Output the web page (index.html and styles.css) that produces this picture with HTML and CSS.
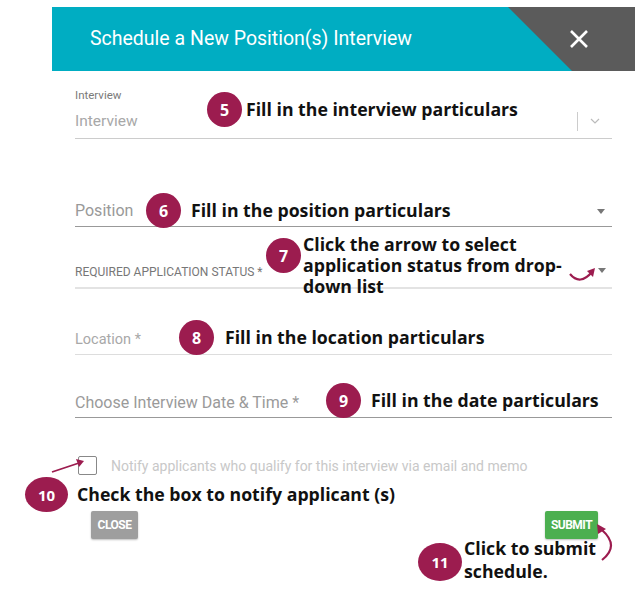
FILE: index.html
```html
<!DOCTYPE html>
<html lang="en">
<head>
    <meta charset="UTF-8">
    <meta name="viewport" content="width=device-width, initial-scale=1.0">
    <title>Schedule a New Position(s) Interview</title>
    <link rel="stylesheet" href="styles.css">
</head>
<body>
    <div class="page">
        <div class="dialog">
            <div class="dialog-head">
                <h2 class="dialog-title">Schedule a New Position(s) Interview</h2>
                <div class="dialog-close">
                    <svg width="20" height="20" viewBox="0 0 20 20"><path d="M2 2 L18 18 M18 2 L2 18" stroke="#fff" stroke-width="2.6" fill="none"/></svg>
                </div>
            </div>

            <div class="dialog-body">
                <div class="field field-interview">
                    <div class="field-label">Interview</div>
                    <div class="field-row">
                        <span class="field-value">Interview</span>
                        <span class="select-tools">
                            <span class="sep"></span>
                            <svg width="10" height="6" viewBox="0 0 10 6"><path d="M1 1 L5 5 L9 1" stroke="#bbb" stroke-width="1.2" fill="none"/></svg>
                        </span>
                    </div>
                </div>

                <div class="field field-position dark-line">
                    <div class="field-row">
                        <span class="field-value">Position</span>
                        <span class="caret"></span>
                    </div>
                </div>

                <div class="field field-status">
                    <div class="field-row">
                        <span class="field-value small-caps">REQUIRED APPLICATION STATUS *</span>
                        <span class="caret caret-status"></span>
                    </div>
                </div>

                <div class="field field-location">
                    <div class="field-row">
                        <span class="field-value">Location *</span>
                    </div>
                </div>

                <div class="field field-date dark-line">
                    <div class="field-row">
                        <span class="field-value">Choose Interview Date &amp; Time *</span>
                    </div>
                </div>

                <label class="notify">
                    <span class="checkbox"></span>
                    Notify applicants who qualify for this interview via email and memo
                </label>

                <div class="actions">
                    <button class="btn btn-close">CLOSE</button>
                    <button class="btn btn-submit">SUBMIT</button>
                </div>
            </div>
        </div>

        <!-- annotations laid over the form -->
        <div class="callout c5"><span class="badge">5</span><span class="note">Fill in the interview particulars</span></div>
        <div class="callout c6"><span class="badge">6</span><span class="note">Fill in the position particulars</span></div>
        <div class="callout c7"><span class="badge">7</span><span class="note">Click the arrow to select<br>application status from drop-<br>down list</span></div>
        <div class="callout c8"><span class="badge">8</span><span class="note">Fill in the location particulars</span></div>
        <div class="callout c9"><span class="badge">9</span><span class="note">Fill in the date particulars</span></div>
        <div class="callout c10"><span class="badge badge-wide">10</span><span class="note">Check the box to notify applicant (s)</span></div>
        <div class="callout c11"><span class="badge badge-wide">11</span><span class="note">Click to submit<br>schedule.</span></div>

        <svg class="arrow arrow-7" width="32" height="24" viewBox="0 0 32 24">
            <path d="M2 10 Q12 22 24 8" stroke="#9c1c4f" stroke-width="2.2" fill="none"/>
            <path d="M19 7 L27 4 L25 13 Z" fill="#9c1c4f"/>
        </svg>
        <svg class="arrow arrow-10" width="36" height="16" viewBox="0 0 36 16">
            <path d="M1 14 L28 5" stroke="#9c1c4f" stroke-width="1.8" fill="none"/>
            <path d="M25 1 L33 3 L28 9 Z" fill="#9c1c4f"/>
        </svg>
        <svg class="arrow arrow-11" width="26" height="42" viewBox="0 0 26 42">
            <path d="M8 38 Q26 24 8 8" stroke="#9c1c4f" stroke-width="2.2" fill="none"/>
            <path d="M3 2 L12 7 L4 12 Z" fill="#9c1c4f"/>
        </svg>
    </div>
</body>
</html>
```

FILE: styles.css
```css
body {
    margin: 0;
    background: #fff;
    font-family: Roboto, "Liberation Sans", sans-serif;
}
.page {
    position: relative;
    width: 637px;
    height: 591px;
    overflow: hidden;
}
.dialog {
    margin: 7px 0 0 52px;
    width: 583px;
}
.dialog-head {
    display: flex;
    height: 64px;
    background: #00adc2;
}
.dialog-title {
    flex: 1;
    margin: 0;
    padding-left: 38px;
    font-size: 19.5px;
    font-weight: 400;
    line-height: 64px;
    color: #fff;
}
.dialog-close {
    width: 127px;
    background: #5b5b5b;
    clip-path: polygon(0 0, 100% 0, 100% 100%, 64px 100%);
    display: flex;
    align-items: center;
    padding-left: 61px;
    box-sizing: border-box;
}
.dialog-body {
    padding: 0 23px;
}
.field {
    border-bottom: 1px solid #ddd;
}
.field.dark-line {
    border-bottom-color: #999;
}
.field-row {
    display: flex;
    align-items: center;
    justify-content: space-between;
}
.field-value {
    font-size: 14.5px;
    line-height: 20px;
    color: #a8a8a8;
}
.field-interview {
    padding: 17px 0 7px;
    border-bottom-color: #ccc;
}
.field-interview .field-value {
    font-size: 15.5px;
}
.field-label {
    font-size: 11.5px;
    line-height: 14px;
    color: #7a7a7a;
    margin-bottom: 9px;
}
.select-tools {
    display: flex;
    align-items: center;
    gap: 12px;
    padding-right: 12px;
}
.sep {
    width: 1px;
    height: 19px;
    background: #ccc;
}
.field-position {
    margin-top: 62px;
    padding-bottom: 5px;
}
.field-position .field-value {
    font-size: 16px;
    color: #999;
}
.caret {
    width: 0;
    height: 0;
    border-left: 4.5px solid transparent;
    border-right: 4.5px solid transparent;
    border-top: 5px solid #777;
    margin-right: 7px;
}
.field-status {
    margin-top: 37px;
    padding-bottom: 7px;
    border-bottom: 2px solid #e3e3e3;
}
.field-status .small-caps {
    font-size: 12px;
    line-height: 16px;
    color: #777;
}
.caret-status {
    margin-right: 6px;
    margin-top: -4px;
}
.field-location {
    margin-top: 41px;
    padding-bottom: 4px;
}
.field-date {
    margin-top: 38px;
    padding-bottom: 4px;
}
.field-date .field-value {
    font-size: 16px;
    color: #9a9a9a;
}
.notify {
    display: flex;
    align-items: center;
    gap: 14px;
    margin: 38px 0 0 3px;
    font-size: 14px;
    color: #c8c8c8;
}
.checkbox {
    width: 17px;
    height: 17px;
    border: 1.5px solid #888;
    border-radius: 2px;
}
.actions {
    display: flex;
    justify-content: space-between;
    margin: 36px 14px 0 16px;
}
.btn {
    border: none;
    border-radius: 2px;
    color: #fff;
    font-family: Roboto, "Liberation Sans", sans-serif;
    font-size: 12px;
    font-weight: 700;
    letter-spacing: -0.5px;
    padding: 0 4px;
    height: 28px;
    box-shadow: 0 1px 2px rgba(0,0,0,0.25);
}
.btn-close {
    background: #9e9e9e;
    width: 47px;
}
.btn-submit {
    background: #4caf50;
    width: 53px;
}

/* annotations */
.callout {
    position: absolute;
    display: flex;
    align-items: center;
    font-family: "Open Sans", Lato, sans-serif;
}
.badge {
    flex: none;
    width: 35px;
    height: 35px;
    border-radius: 50%;
    background: #9c1c4f;
    color: #fff;
    font-weight: 700;
    font-size: 16px;
    display: flex;
    align-items: center;
    justify-content: center;
}
.badge-wide {
    width: 43px;
    height: 35px;
    font-size: 15px;
}
.note {
    font-size: 17.7px;
    font-weight: 700;
    color: #111;
    line-height: 21px;
}
.c5 { left: 207px; top: 92px; gap: 4px; }
.c6 { left: 146px; top: 193px; gap: 10px; }
.c7 { left: 266px; top: 234px; gap: 2px; align-items: flex-start; }
.c7 .badge { margin-top: 4px; }
.c8 { left: 179px; top: 320px; gap: 11px; }
.c9 { left: 326px; top: 383px; gap: 10px; }
.c10 { left: 25px; top: 477px; gap: 9px; }
.c11 { left: 418px; top: 537px; gap: 2px; }
.c11 .badge { width: 44px; height: 38px; margin-top: 4px; }
.c11 .note { line-height: 23px; }
.arrow {
    position: absolute;
}
.arrow-7 { left: 568px; top: 264px; }
.arrow-10 { left: 51px; top: 458px; }
.arrow-11 { left: 594px; top: 522px; }
```
